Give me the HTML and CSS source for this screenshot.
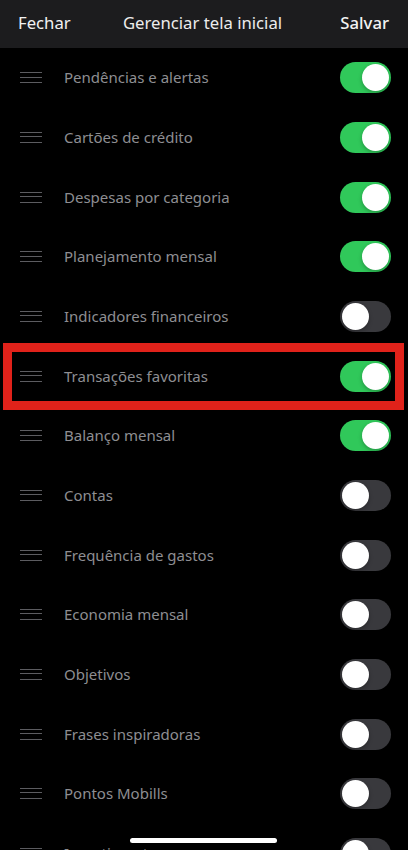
FILE: index.html
```html
<!DOCTYPE html>
<html lang="pt-BR">
<head>
    <meta charset="UTF-8">
    <meta name="viewport" content="width=device-width, initial-scale=1.0">
    <title>Gerenciar tela inicial</title>
    <link rel="stylesheet" href="styles.css">
</head>
<body>
    <div class="header">
        <span class="header-btn">Fechar</span>
        <span class="header-title">Gerenciar tela inicial</span>
        <span class="header-btn save">Salvar</span>
    </div>
    <div class="list">
        <div class="row"><span class="handle"></span><span class="label">Pendências e alertas</span><span class="toggle on"></span></div>
        <div class="row"><span class="handle"></span><span class="label">Cartões de crédito</span><span class="toggle on"></span></div>
        <div class="row"><span class="handle"></span><span class="label">Despesas por categoria</span><span class="toggle on"></span></div>
        <div class="row"><span class="handle"></span><span class="label">Planejamento mensal</span><span class="toggle on"></span></div>
        <div class="row"><span class="handle"></span><span class="label">Indicadores financeiros</span><span class="toggle"></span></div>
        <div class="row highlight"><span class="handle"></span><span class="label">Transações favoritas</span><span class="toggle on"></span></div>
        <div class="row"><span class="handle"></span><span class="label">Balanço mensal</span><span class="toggle on"></span></div>
        <div class="row"><span class="handle"></span><span class="label">Contas</span><span class="toggle"></span></div>
        <div class="row"><span class="handle"></span><span class="label">Frequência de gastos</span><span class="toggle"></span></div>
        <div class="row"><span class="handle"></span><span class="label">Economia mensal</span><span class="toggle"></span></div>
        <div class="row"><span class="handle"></span><span class="label">Objetivos</span><span class="toggle"></span></div>
        <div class="row"><span class="handle"></span><span class="label">Frases inspiradoras</span><span class="toggle"></span></div>
        <div class="row"><span class="handle"></span><span class="label">Pontos Mobills</span><span class="toggle"></span></div>
        <div class="row"><span class="handle"></span><span class="label">Investimentos</span><span class="toggle"></span></div>
    </div>
    <div class="home-indicator"></div>
</body>
</html>
```

FILE: styles.css
```css
body {
    margin: 0;
    width: 408px;
    height: 850px;
    overflow: hidden;
    background: #000;
    font-family: 'Noto Sans', 'Open Sans', sans-serif;
    position: relative;
}
.header {
    height: 48px;
    background: #1c1c1e;
    display: flex;
    align-items: center;
    justify-content: space-between;
    padding: 0 19px 4px 18px;
    box-sizing: border-box;
    color: #f2f2f2;
    font-size: 16.7px;
}
.header-title {
    color: #ececec;
    margin-right: 6px;
}
.save {
    font-weight: 500;
}
.list {
    display: flex;
    flex-direction: column;
}
.row {
    height: 59.67px;
    display: flex;
    align-items: center;
    padding: 0 17px 0 20px;
    position: relative;
}
.highlight::after {
    content: '';
    position: absolute;
    left: 3px;
    right: 4px;
    top: -3px;
    bottom: -4px;
    border: 9px solid #e0221a;
    box-sizing: border-box;
}
.handle {
    width: 22px;
    height: 11px;
    border-top: 1.5px solid #5c5c60;
    border-bottom: 1.5px solid #5c5c60;
    position: relative;
    box-sizing: border-box;
}
.handle::after {
    content: '';
    position: absolute;
    left: 0;
    right: 0;
    top: 3.25px;
    border-top: 1.5px solid #5c5c60;
}
.label {
    flex: 1;
    margin-left: 22px;
    color: #8e8e92;
    font-size: 15px;
    margin-top: -1px;
}
.toggle {
    width: 51px;
    height: 31px;
    border-radius: 16px;
    background: #39393d;
    position: relative;
}
.toggle::after {
    content: '';
    position: absolute;
    top: 2px;
    left: 2px;
    width: 27px;
    height: 27px;
    border-radius: 50%;
    background: #fff;
    box-shadow: 0 2px 4px rgba(0, 0, 0, 0.25);
}
.toggle.on {
    background: #30c85a;
}
.toggle.on::after {
    left: 22px;
}
.home-indicator {
    position: absolute;
    left: 130px;
    top: 838px;
    width: 147px;
    height: 5px;
    border-radius: 3px;
    background: #fff;
}
```
